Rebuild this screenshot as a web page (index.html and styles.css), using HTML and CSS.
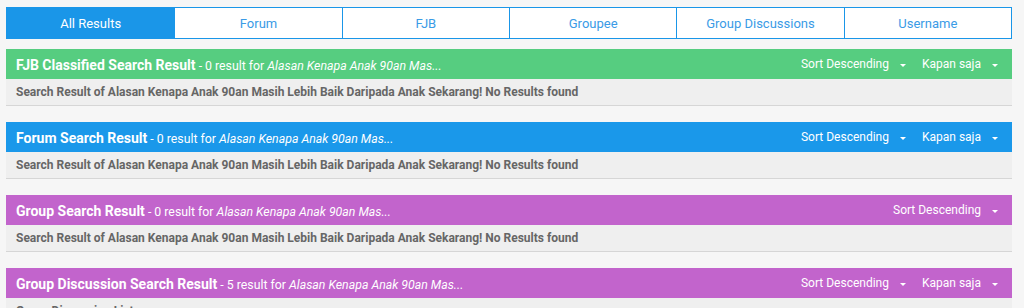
FILE: index.html
```html
<!DOCTYPE html>
<html>
<head>
<meta charset="utf-8">
<link rel="stylesheet" href="styles.css">
</head>
<body>
<div class="page">
  <nav class="tabs">
    <a class="tab active">All Results</a>
    <a class="tab">Forum</a>
    <a class="tab">FJB</a>
    <a class="tab">Groupee</a>
    <a class="tab">Group Discussions</a>
    <a class="tab">Username</a>
  </nav>

  <section class="result">
    <header class="bar green">
      <div class="title"><b>FJB Classified Search Result</b><span class="meta"> - 0 result for <i>Alasan Kenapa Anak 90an Mas...</i></span></div>
      <div class="controls">
        <span class="dd">Sort Descending<span class="caret"></span></span>
        <span class="dd">Kapan saja<span class="caret"></span></span>
      </div>
    </header>
    <div class="body">Search Result of Alasan Kenapa Anak 90an Masih Lebih Baik Daripada Anak Sekarang! No Results found</div>
  </section>

  <section class="result">
    <header class="bar blue">
      <div class="title"><b>Forum Search Result</b><span class="meta"> - 0 result for <i>Alasan Kenapa Anak 90an Mas...</i></span></div>
      <div class="controls">
        <span class="dd">Sort Descending<span class="caret"></span></span>
        <span class="dd">Kapan saja<span class="caret"></span></span>
      </div>
    </header>
    <div class="body">Search Result of Alasan Kenapa Anak 90an Masih Lebih Baik Daripada Anak Sekarang! No Results found</div>
  </section>

  <section class="result">
    <header class="bar purple">
      <div class="title"><b>Group Search Result</b><span class="meta"> - 0 result for <i>Alasan Kenapa Anak 90an Mas...</i></span></div>
      <div class="controls">
        <span class="dd">Sort Descending<span class="caret"></span></span>
      </div>
    </header>
    <div class="body">Search Result of Alasan Kenapa Anak 90an Masih Lebih Baik Daripada Anak Sekarang! No Results found</div>
  </section>

  <section class="result">
    <header class="bar purple">
      <div class="title"><b>Group Discussion Search Result</b><span class="meta"> - 5 result for <i>Alasan Kenapa Anak 90an Mas...</i></span></div>
      <div class="controls">
        <span class="dd">Sort Descending<span class="caret"></span></span>
        <span class="dd">Kapan saja<span class="caret"></span></span>
      </div>
    </header>
    <div class="body">Group Discussion List</div>
  </section>
</div>
</body>
</html>
```

FILE: styles.css
```css
html, body {
  margin: 0;
  padding: 0;
  background: #f6f6f6;
  font-family: Roboto, "Liberation Sans", sans-serif;
  overflow: hidden;
}

.page {
  padding: 7px 12px 0 6px;
  display: flex;
  flex-direction: column;
  gap: 16px;
}

.tabs {
  display: grid;
  grid-template-columns: repeat(6, 1fr);
  border: 1px solid #1a96e8;
  background: #fff;
  margin-bottom: -6px;
  width: 1004px;
}

.tab {
  height: 30px;
  display: flex;
  align-items: center;
  justify-content: center;
  font-size: 13px;
  color: #3a9be6;
  border-left: 1px solid #1a96e8;
}

.tab:first-child {
  border-left: none;
}

.tab.active {
  background: #1a96e8;
  color: #fff;
}

.result {
  display: flex;
  flex-direction: column;
}

.bar {
  height: 30px;
  display: flex;
  align-items: center;
  justify-content: space-between;
  padding: 0 14px 0 10px;
  color: #fff;
}

.green { background: #56cd80; }
.blue { background: #1a98ea; }
.purple { background: #c264cc; }

.title b {
  font-size: 14px;
  font-weight: 700;
}

.meta {
  font-size: 12.3px;
}

.controls {
  display: flex;
  gap: 16px;
  font-size: 12px;
}

.dd {
  display: flex;
  align-items: center;
}

.caret {
  width: 0;
  height: 0;
  margin-left: 11px;
  margin-top: 2px;
  border-left: 3px solid transparent;
  border-right: 3px solid transparent;
  border-top: 3px solid #fff;
}

.body {
  height: 26px;
  display: flex;
  align-items: center;
  padding-left: 10px;
  background: #efefef;
  border-bottom: 1px solid #d6d6d6;
  font-size: 12px;
  font-weight: 700;
  color: #666;
}
```
